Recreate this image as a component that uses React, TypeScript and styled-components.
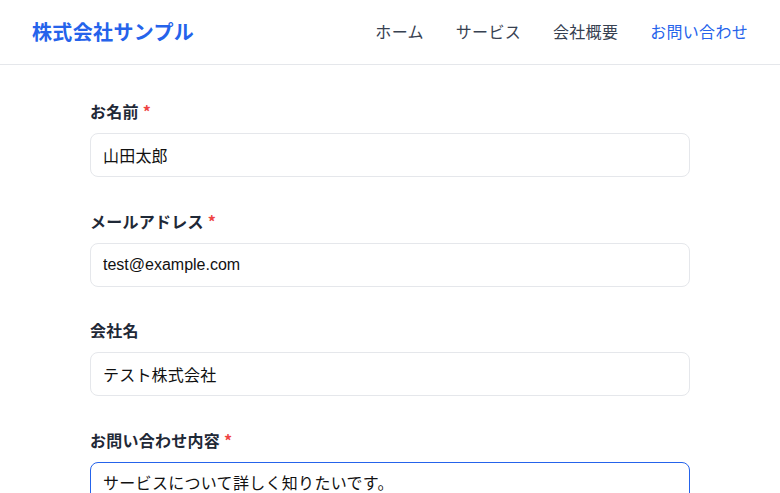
import React from "react";
import styled, { createGlobalStyle } from "styled-components";

const Global = createGlobalStyle`
  html, body { margin: 0; padding: 0; background: #ffffff; }
  body { font-family: "Liberation Sans", "Noto Sans CJK JP", sans-serif; color: #1f2937; }
  * { box-sizing: border-box; }
`;

const Header = styled.header`
  height: 65px;
  border-bottom: 1px solid #e5e7eb;
  display: flex;
  align-items: center;
  justify-content: space-between;
  padding: 0 32px 2px 32px;
`;

const Logo = styled.div`
  font-size: 20px;
  font-weight: 700;
  color: #2563eb;
  letter-spacing: 0.35px;
  font-family: "Noto Sans CJK JP", sans-serif;
`;

const Nav = styled.nav`
  display: flex;
  gap: 32px;
`;

const NavLink = styled.a<{ $active?: boolean }>`
  font-size: 16px;
  color: ${(p) => (p.$active ? "#2563eb" : "#374151")};
  text-decoration: none;
  letter-spacing: 0.3px;
  font-family: "Noto Sans CJK JP", sans-serif;
`;

const Main = styled.main`
  display: flex;
  justify-content: center;
  padding-top: 35px;
`;

const Form = styled.form`
  width: 600px;
  display: flex;
  flex-direction: column;
  gap: 32.67px;
`;

const Field = styled.div`
  display: flex;
  flex-direction: column;
  gap: 10px;
`;

const Label = styled.label`
  font-size: 16px;
  line-height: 23px;
  font-weight: 700;
  color: #1f2937;
  letter-spacing: 0.25px;
  font-family: "Noto Sans CJK JP", sans-serif;
`;

const Req = styled.span`
  color: #ef4444;
  margin-left: 4px;
`;

const Input = styled.input<{ $cjk?: boolean }>`
  height: 44px;
  width: 100%;
  border: 1px solid #e5e7eb;
  border-radius: 8px;
  padding: 0 12px;
  font-size: 16px;
  color: #111111;
  letter-spacing: ${(p) => (p.$cjk ? "0.2px" : "0")};
  font-family: "Liberation Sans", "Noto Sans CJK JP", sans-serif;
  outline: none;
`;

const TextArea = styled.textarea`
  width: 100%;
  height: 120px;
  border: 1px solid #2563eb;
  border-radius: 8px;
  padding: 9px 12px;
  font-size: 16px;
  line-height: 24px;
  color: #111111;
  letter-spacing: 0.3px;
  font-family: "Liberation Sans", "Noto Sans CJK JP", sans-serif;
  outline: none;
  resize: none;
`;

export default function App() {
  return (
    <>
      <Global />
      <Header>
        <Logo>株式会社サンプル</Logo>
        <Nav>
          <NavLink>ホーム</NavLink>
          <NavLink>サービス</NavLink>
          <NavLink>会社概要</NavLink>
          <NavLink $active>お問い合わせ</NavLink>
        </Nav>
      </Header>
      <Main>
        <Form>
          <Field>
            <Label>お名前<Req>*</Req></Label>
            <Input $cjk defaultValue="山田太郎" />
          </Field>
          <Field>
            <Label>メールアドレス<Req>*</Req></Label>
            <Input defaultValue="test@example.com" />
          </Field>
          <Field>
            <Label>会社名</Label>
            <Input $cjk defaultValue="テスト株式会社" />
          </Field>
          <Field>
            <Label>お問い合わせ内容<Req>*</Req></Label>
            <TextArea defaultValue="サービスについて詳しく知りたいです。" />
          </Field>
        </Form>
      </Main>
    </>
  );
}
